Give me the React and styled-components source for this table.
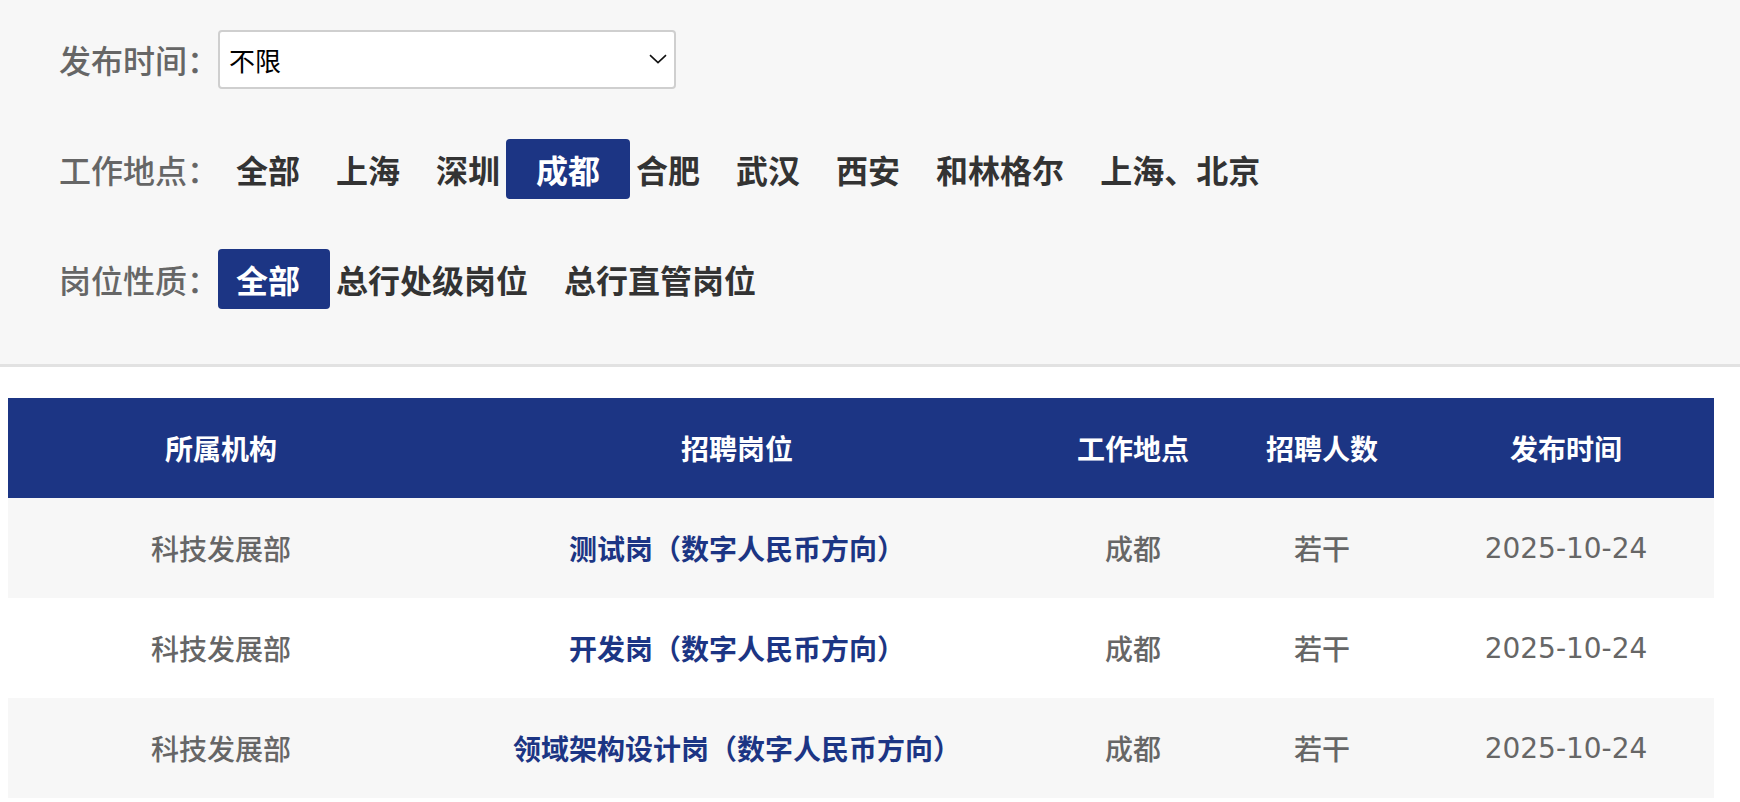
import React, { useState } from 'react';
import styled, { createGlobalStyle } from 'styled-components';

const GlobalStyle = createGlobalStyle`
  html, body {
    margin: 0;
    padding: 0;
    background: #fff;
  }
  body {
    font-family: "Noto Sans CJK SC", "Noto Sans", sans-serif;
  }
`;

const locations = ['全部', '上海', '深圳', '成都', '合肥', '武汉', '西安', '和林格尔', '上海、北京'];
const kinds = ['全部', '总行处级岗位', '总行直管岗位'];

const jobs = [
  { org: '科技发展部', title: '测试岗（数字人民币方向）', place: '成都', count: '若干', date: '2025-10-24' },
  { org: '科技发展部', title: '开发岗（数字人民币方向）', place: '成都', count: '若干', date: '2025-10-24' },
  { org: '科技发展部', title: '领域架构设计岗（数字人民币方向）', place: '成都', count: '若干', date: '2025-10-24' },
];

const columns = [
  { key: 'org', label: '所属机构', width: 426 },
  { key: 'title', label: '招聘岗位', width: 606 },
  { key: 'place', label: '工作地点', width: 186 },
  { key: 'count', label: '招聘人数', width: 192 },
  { key: 'date', label: '发布时间', width: 296 },
];

const App = () => {
  const [place, setPlace] = useState('成都');
  const [kind, setKind] = useState('全部');

  return (
    <Page>
      <GlobalStyle />
      <FilterPanel>
        <FilterRow>
          <FilterLabel>发布时间：</FilterLabel>
          <SelectBox>
            <span>不限</span>
            <svg width="18" height="10" viewBox="0 0 18 10" fill="none">
              <path d="M1 1.2 L9 8.6 L17 1.2" stroke="#111" strokeWidth="1.6" />
            </svg>
          </SelectBox>
        </FilterRow>

        <FilterRow>
          <FilterLabel>工作地点：</FilterLabel>
          <OptionList>
            {locations.map((item) => (
              <Option key={item} $active={item === place} onClick={() => setPlace(item)}>
                {item}
              </Option>
            ))}
          </OptionList>
        </FilterRow>

        <FilterRow>
          <FilterLabel>岗位性质：</FilterLabel>
          <OptionList>
            {kinds.map((item) => (
              <Option key={item} $active={item === kind} onClick={() => setKind(item)}>
                {item}
              </Option>
            ))}
          </OptionList>
        </FilterRow>
      </FilterPanel>

      <TableWrap>
        <JobTable>
          <colgroup>
            {columns.map((c) => (
              <col key={c.key} style={{ width: c.width }} />
            ))}
          </colgroup>
          <thead>
            <tr>
              {columns.map((c) => (
                <HeadCell key={c.key}>{c.label}</HeadCell>
              ))}
            </tr>
          </thead>
          <tbody>
            {jobs.map((job, i) => (
              <BodyRow key={job.title} $striped={i % 2 === 0}>
                <Cell>{job.org}</Cell>
                <Cell>
                  <JobLink href="#">{job.title}</JobLink>
                </Cell>
                <Cell>{job.place}</Cell>
                <Cell>{job.count}</Cell>
                <Cell $numeric>{job.date}</Cell>
              </BodyRow>
            ))}
          </tbody>
        </JobTable>
      </TableWrap>
    </Page>
  );
};

// Styles
const Page = styled.div`
  width: 1740px;
  min-height: 802px;
  background: #fff;
`;

const FilterPanel = styled.div`
  background: #f7f7f7;
  padding: 29px 0 5px 59px;
  border-bottom: 3px solid #e2e2e2;
`;

const FilterRow = styled.div`
  display: flex;
  align-items: center;
  height: 60px;
  margin-bottom: 50px;
`;

const FilterLabel = styled.span`
  width: 159px;
  flex-shrink: 0;
  color: #666;
  font-size: 32px;
  font-weight: 500;
  line-height: 60px;
  white-space: nowrap;
`;

const SelectBox = styled.div`
  box-sizing: border-box;
  width: 458px;
  height: 59px;
  display: flex;
  align-items: center;
  justify-content: space-between;
  padding: 0 7px 0 9px;
  background: #fff;
  border: 2px solid #cfcfcf;
  border-radius: 4px;
  color: #000;
  font-size: 26px;
  cursor: pointer;
`;

const OptionList = styled.div`
  display: flex;
  align-items: center;
  height: 60px;
`;

const Option = styled.span`
  display: flex;
  align-items: center;
  height: 60px;
  padding: ${(p) => (p.$active ? '0 30px' : '0 18px')};
  margin: ${(p) => (p.$active ? '0 -12px' : '0')};
  border-radius: 4px;
  background: ${(p) => (p.$active ? '#1c3584' : 'transparent')};
  color: ${(p) => (p.$active ? '#fff' : '#333')};
  font-size: 32px;
  font-weight: 700;
  white-space: nowrap;
  cursor: pointer;

  &:first-child {
    margin-left: 0;
    padding-left: 18px;
  }
`;

const TableWrap = styled.div`
  margin: 31px 26px 0 8px;
`;

const JobTable = styled.table`
  width: 1706px;
  table-layout: fixed;
  border-collapse: collapse;
`;

const HeadCell = styled.th`
  height: 100px;
  padding: 0;
  background: #1c3584;
  color: #fff;
  font-size: 28px;
  font-weight: 700;
  text-align: center;
`;

const BodyRow = styled.tr`
  background: ${(p) => (p.$striped ? '#f7f7f7' : '#fff')};
`;

const Cell = styled.td`
  height: 100px;
  padding: 0;
  color: #666;
  font-family: ${(p) => (p.$numeric ? '"DejaVu Sans", sans-serif' : 'inherit')};
  font-size: 28px;
  font-weight: ${(p) => (p.$numeric ? 400 : 500)};
  text-align: center;
`;

const JobLink = styled.a`
  color: #1c3584;
  font-weight: 700;
  text-decoration: none;

  &:hover {
    text-decoration: underline;
  }
`;

export default App;
